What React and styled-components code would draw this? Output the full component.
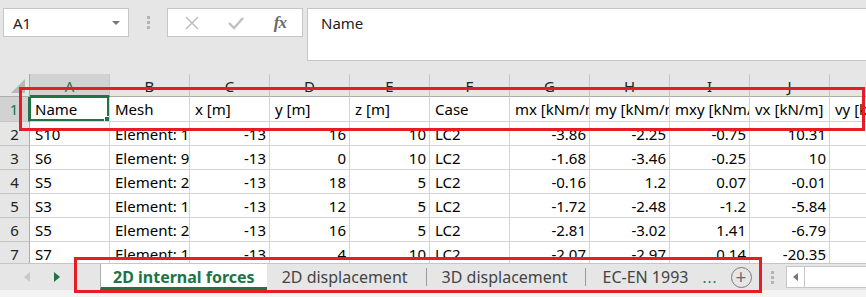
import React from 'react'
import styled, { createGlobalStyle } from 'styled-components';

const GlobalStyle = createGlobalStyle`
    body {
        margin: 0;
        background: #ffffff;
        font-family: 'Noto Sans', 'Liberation Sans', sans-serif;
    }
`

const Window = styled.div`
    position: relative;
    width: 866px;
    height: 297px;
    overflow: hidden;
    background: #e6e6e6;
    display: flex;
    flex-direction: column;
`

const FormulaBar = styled.div`
    display: flex;
    align-items: flex-start;
    height: 74px;
    padding-top: 8px;
    box-sizing: border-box;
    flex-shrink: 0;
`

const NameBox = styled.div`
    margin-left: 3px;
    width: 126px;
    height: 29px;
    box-sizing: border-box;
    background: #fff;
    border: 1px solid #c6c6c6;
    display: flex;
    align-items: center;
    justify-content: space-between;
    padding: 0 8px 0 9px;
    font-size: 15px;
    color: #222;
`

const Caret = styled.span`
    width: 0;
    height: 0;
    border-left: 4px solid transparent;
    border-right: 4px solid transparent;
    border-top: 4px solid #777;
`

const Grip = styled.div`
    width: 38px;
    height: 29px;
    display: flex;
    flex-direction: column;
    align-items: center;
    justify-content: center;
    gap: 2px;

    span {
        width: 3px;
        height: 3px;
        background: #b4b4b4;
    }
`

const ButtonBox = styled.div`
    width: 136px;
    height: 29px;
    box-sizing: border-box;
    background: #fff;
    border: 1px solid #c6c6c6;
    display: flex;
    align-items: center;
    justify-content: space-between;
    padding: 0 16px 0 17px;
`

const Fx = styled.span`
    font-family: 'Liberation Serif', serif;
    font-style: italic;
    font-weight: bold;
    font-size: 17px;
    color: #6a6a6a;
    letter-spacing: -1px;
`

const FormulaInput = styled.div`
    margin-left: 4px;
    flex: 1;
    height: 53px;
    box-sizing: border-box;
    background: #fff;
    border: 1px solid #c6c6c6;
    border-right: none;
    padding: 4px 13px;
    font-size: 15px;
    color: #222;
`

const Sheet = styled.div`
    flex: 1;
    min-height: 0;
    overflow: hidden;
    display: flex;
    flex-direction: column;
`

const Row = styled.div`
    display: flex;
    height: ${p => p.$h}px;
    flex-shrink: 0;
    background: ${p => p.$head ? '#e6e6e6' : '#fff'};
`

const Corner = styled.div`
    width: 30px;
    flex-shrink: 0;
    box-sizing: border-box;
    border-right: 1px solid #ababab;
    border-bottom: 1px solid #ababab;
    background: #e6e6e6;
    position: relative;

    &::after {
        content: '';
        position: absolute;
        right: 4px;
        bottom: 3px;
        border-left: 14px solid transparent;
        border-bottom: 14px solid #b9b9b9;
    }
`

const ColHead = styled.div`
    width: 80px;
    flex-shrink: 0;
    box-sizing: border-box;
    border-right: 1px solid #c6c6c6;
    border-bottom: ${p => p.$active ? '2px solid #217346' : '1px solid #ababab'};
    background: ${p => p.$active ? '#d2d2d2' : '#e6e6e6'};
    color: ${p => p.$active ? '#217346' : '#222'};
    font-size: 15px;
    display: flex;
    align-items: center;
    justify-content: center;
    padding-top: 2px;
`

const RowHead = styled.div`
    width: 30px;
    flex-shrink: 0;
    box-sizing: border-box;
    border-right: ${p => p.$active ? '2px solid #217346' : '1px solid #ababab'};
    border-bottom: 1px solid #c6c6c6;
    background: ${p => p.$active ? '#d2d2d2' : '#e6e6e6'};
    color: ${p => p.$active ? '#217346' : '#222'};
    font-size: 15px;
    display: flex;
    align-items: center;
    justify-content: center;
`

const Cell = styled.div`
    width: 80px;
    flex-shrink: 0;
    box-sizing: border-box;
    border-right: 1px solid #d4d4d4;
    border-bottom: 1px solid #d4d4d4;
    font-size: 15px;
    color: #000;
    white-space: nowrap;
    overflow: hidden;
    display: flex;
    align-items: center;
    justify-content: ${p => p.$num ? 'flex-end' : 'flex-start'};
    padding: ${p => p.$num ? '0 3px 0 0' : '0 0 0 5px'};
    position: relative;
`

const Selection = styled.div`
    position: absolute;
    left: -1px;
    top: -1px;
    right: 0;
    bottom: 0;
    border: 2px solid #217346;

    &::after {
        content: '';
        position: absolute;
        right: -4px;
        bottom: -4px;
        width: 5px;
        height: 5px;
        background: #217346;
        border: 1px solid #fff;
    }
`

const TabBar = styled.div`
    height: 27px;
    flex-shrink: 0;
    display: flex;
    align-items: stretch;
    background: #e6e6e6;
    border-top: 1px solid #c6c6c6;
    box-sizing: border-box;
`

const NavArrows = styled.div`
    width: 100px;
    display: flex;
    align-items: center;
    padding-left: 24px;
    gap: 24px;
    box-sizing: border-box;
`

const Arrow = styled.span`
    width: 0;
    height: 0;
    border-top: 5px solid transparent;
    border-bottom: 5px solid transparent;
    ${p => p.$left
        ? 'border-right: 6px solid #c8c8c8;'
        : 'border-left: 6px solid #217346;'}
`

const Tab = styled.div`
    display: flex;
    align-items: center;
    padding: 0 ${p => p.$pr}px 0 ${p => p.$pl}px;
    font-size: 16px;
    white-space: nowrap;
    box-sizing: border-box;
    ${p => p.$active ? `
        background: #fff;
        color: #217346;
        font-weight: bold;
        border-bottom: 3px solid #217346;
        border-left: 1px solid #ababab;
        padding-top: 2px;
    ` : `
        color: #444;
    `}
`

const TabSep = styled.span`
    align-self: center;
    width: 1px;
    height: 18px;
    background: #9a9a9a;
`

const More = styled.span`
    align-self: center;
    color: #217346;
    font-size: 15px;
    margin-left: 6px;
    letter-spacing: 1px;
`

const AddSheet = styled.div`
    align-self: center;
    margin-left: 13px;
    width: 19px;
    height: 19px;
    border-radius: 50%;
    border: 1.5px solid #7a7a7a;
    color: #6a6a6a;
    display: flex;
    align-items: center;
    justify-content: center;
    font-size: 19px;
    line-height: 1;
`

const SplitGrip = styled.div`
    margin-left: 12px;
    width: 18px;
    display: flex;
    flex-direction: column;
    align-items: center;
    justify-content: center;
    gap: 2px;

    span {
        width: 3px;
        height: 3px;
        background: #b4b4b4;
    }
`

const HScroll = styled.div`
    align-self: center;
    flex: 1;
    height: 20px;
    background: #fff;
    border: 1px solid #c6c6c6;
    border-right: none;
    display: flex;
    align-items: center;
    margin-left: 4px;

    &::before {
        content: '';
        margin-left: 6px;
        border-top: 4px solid transparent;
        border-bottom: 4px solid transparent;
        border-right: 5px solid #777;
    }

    &::after {
        content: '';
        margin-left: 6px;
        width: 1px;
        height: 20px;
        background: #c6c6c6;
    }
`

const Footer = styled.div`
    height: 7px;
    flex-shrink: 0;
    background: #f3f3f3;
`

const Highlight = styled.div`
    position: absolute;
    left: ${p => p.$x}px;
    top: ${p => p.$y}px;
    width: ${p => p.$w}px;
    height: ${p => p.$h}px;
    border: 3px solid #e81c24;
    box-sizing: border-box;
    pointer-events: none;
`

const columns = ['A', 'B', 'C', 'D', 'E', 'F', 'G', 'H', 'I', 'J', 'K'];
const headers = ['Name', 'Mesh', 'x [m]', 'y [m]', 'z [m]', 'Case', 'mx [kNm/m]', 'my [kNm/m]', 'mxy [kNm/m]', 'vx [kN/m]', 'vy [kN/m]'];
const textCols = [0, 1, 5];

const data = [
    ['S10', 'Element: 1', '-13', '16', '10', 'LC2', '-3.86', '-2.25', '-0.75', '10.31', ''],
    ['S6', 'Element: 9', '-13', '0', '10', 'LC2', '-1.68', '-3.46', '-0.25', '10', ''],
    ['S5', 'Element: 2', '-13', '18', '5', 'LC2', '-0.16', '1.2', '0.07', '-0.01', ''],
    ['S3', 'Element: 1', '-13', '12', '5', 'LC2', '-1.72', '-2.48', '-1.2', '-5.84', ''],
    ['S5', 'Element: 2', '-13', '16', '5', 'LC2', '-2.81', '-3.02', '1.41', '-6.79', ''],
    ['S7', 'Element: 1', '-13', '4', '10', 'LC2', '-2.07', '-2.97', '0.14', '-20.35', ''],
];

const XIcon = () => (
    <svg width="14" height="14" viewBox="0 0 14 14">
        <path d="M1 1 L13 13 M13 1 L1 13" stroke="#c0c0c0" strokeWidth="1.6" />
    </svg>
);

const CheckIcon = () => (
    <svg width="16" height="14" viewBox="0 0 16 14">
        <path d="M1 7 L6 12 L15 2" stroke="#c0c0c0" strokeWidth="2.4" fill="none" />
    </svg>
);

function App() {
    return (
        <Window>
            <GlobalStyle />
            <FormulaBar>
                <NameBox>A1<Caret /></NameBox>
                <Grip><span /><span /><span /></Grip>
                <ButtonBox>
                    <XIcon />
                    <CheckIcon />
                    <Fx>fx</Fx>
                </ButtonBox>
                <FormulaInput>Name</FormulaInput>
            </FormulaBar>

            <Sheet>
                <Row $h={23} $head>
                    <Corner />
                    {columns.map((c, i) => (
                        <ColHead key={c} $active={i === 0}>{c}</ColHead>
                    ))}
                </Row>
                <Row $h={25}>
                    <RowHead $active>1</RowHead>
                    {headers.map((h, i) => (
                        <Cell key={h}>
                            {i === 0 && <Selection />}
                            {h}
                        </Cell>
                    ))}
                </Row>
                {data.map((r, ri) => (
                    <Row key={ri} $h={24}>
                        <RowHead>{ri + 2}</RowHead>
                        {r.map((v, ci) => (
                            <Cell key={ci} $num={!textCols.includes(ci)}>{v}</Cell>
                        ))}
                    </Row>
                ))}
            </Sheet>

            <TabBar>
                <NavArrows>
                    <Arrow $left />
                    <Arrow />
                </NavArrows>
                <Tab $active $pl={12} $pr={12}>2D internal forces</Tab>
                <Tab $pl={15} $pr={18}>2D displacement</Tab>
                <TabSep />
                <Tab $pl={15} $pr={18}>3D displacement</Tab>
                <TabSep />
                <Tab $pl={16} $pr={8}>EC-EN 1993</Tab>
                <More>...</More>
                <AddSheet>+</AddSheet>
                <SplitGrip><span /><span /><span /></SplitGrip>
                <HScroll />
            </TabBar>
            <Footer />

            <Highlight $x={19} $y={87} $w={846} $h={44} />
            <Highlight $x={74} $y={257} $w={688} $h={36} />
        </Window>
    )
}

export default App;
